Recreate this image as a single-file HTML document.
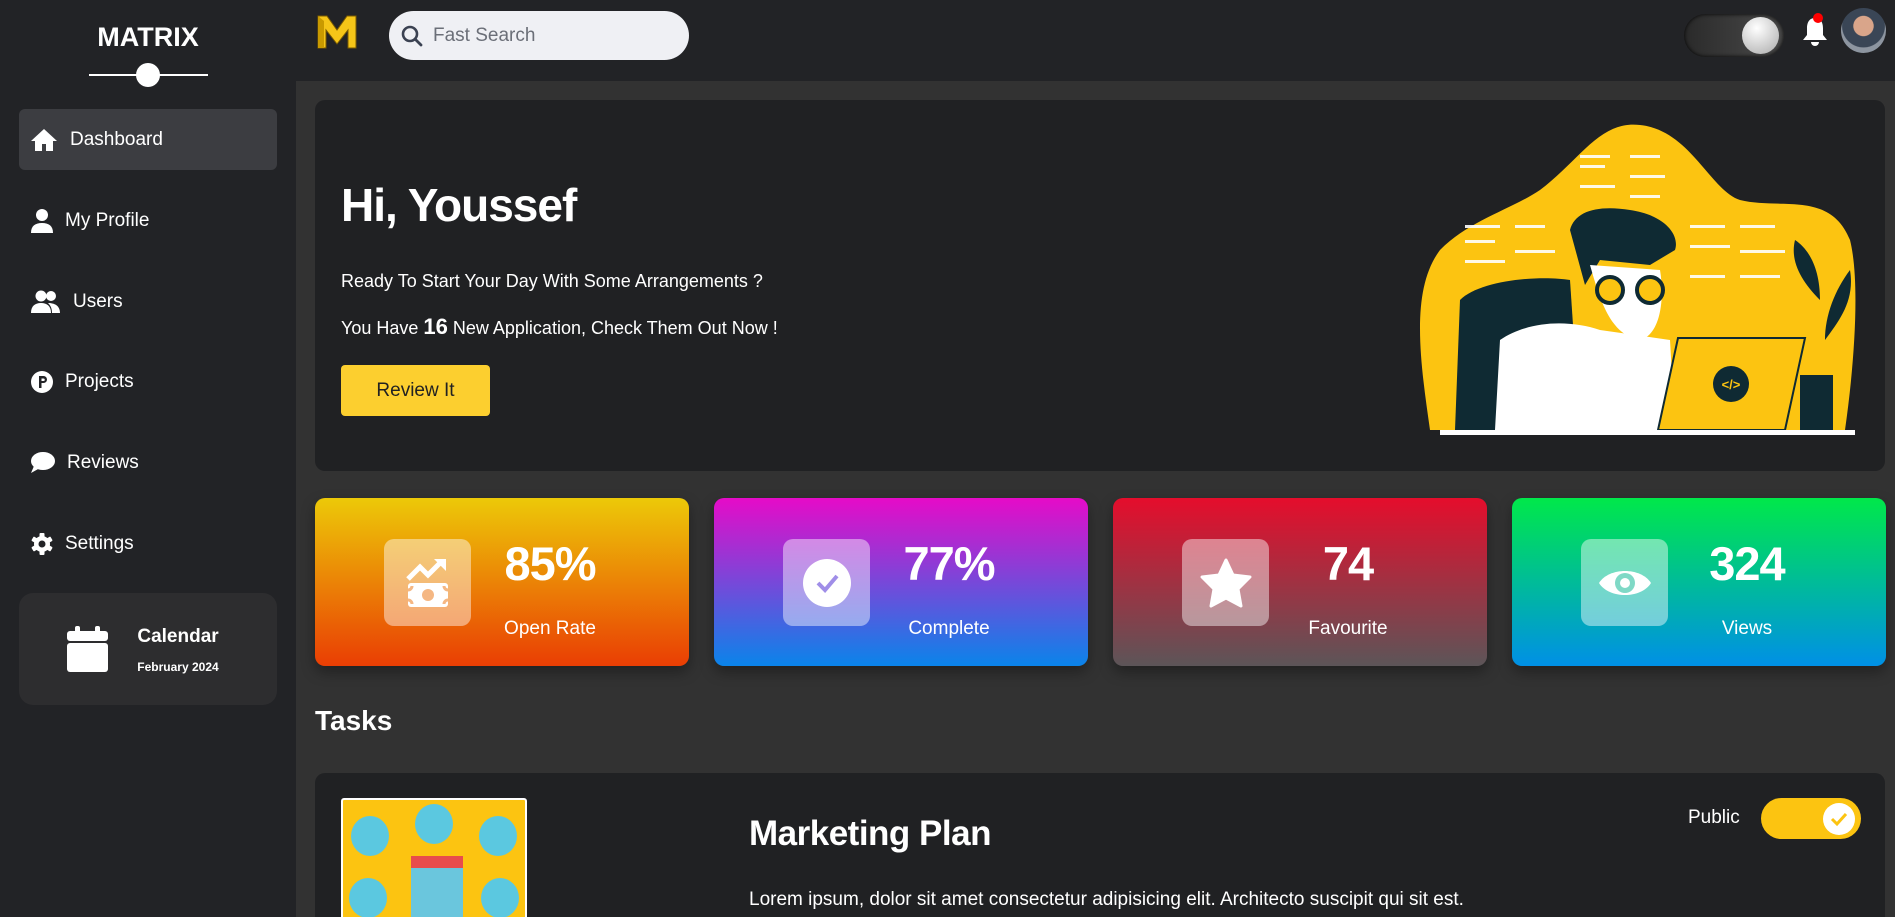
<!DOCTYPE html>
<html><head><meta charset="utf-8"><style>
*{margin:0;padding:0;box-sizing:border-box}
html,body{width:1895px;height:917px;overflow:hidden}
body{background:#323232;font-family:"Liberation Sans",sans-serif;color:#fff;position:relative}
.abs{position:absolute}
.side{left:0;top:0;width:296px;height:917px;background:#222326}
.head{left:296px;top:0;width:1599px;height:81px;background:#222326}
.nav{position:absolute;left:19px;width:258px;height:61px;display:flex;align-items:center;padding-left:12px;font-size:19px}
.nav svg{margin-right:12px}
.card{position:absolute;top:498px;width:374px;height:168px;border-radius:10px;box-shadow:0 6px 14px rgba(0,0,0,.35)}
.ib{position:absolute;left:69px;top:41px;width:87px;height:87px;border-radius:10px;background:rgba(255,255,255,.45);display:flex;align-items:center;justify-content:center}
.num{position:absolute;left:150px;width:170px;text-align:center;top:38px;font-size:47px;font-weight:bold;letter-spacing:-1px}
.lbl{position:absolute;left:150px;width:170px;text-align:center;top:120px;font-size:19px}
</style></head><body>
<div class="abs side"></div>
<div class="abs head"></div>
<div class="abs" style="left:0;width:296px;top:22px;text-align:center;font-size:27px;font-weight:bold">MATRIX</div>
<div class="abs" style="left:89px;top:74px;width:119px;height:2px;background:#fff"></div>
<div class="abs" style="left:136px;top:63px;width:24px;height:24px;border-radius:50%;background:#fff"></div>

<div class="nav" style="top:109px;background:#3c3d41;border-radius:6px;padding-left:11px">
<svg width="28" height="24" viewBox="0 0 28 24"><path d="M14 1L1 13h4v10h7v-7h4v7h7V13h4z" fill="#fff"/></svg>Dashboard</div>
<div class="nav" style="top:190px"><svg width="22" height="24" viewBox="0 0 22 24"><circle cx="11" cy="6" r="6" fill="#fff"/><path d="M0 24c0-7 4-10 11-10s11 3 11 10z" fill="#fff"/></svg>My Profile</div>
<div class="nav" style="top:271px"><svg width="30" height="24" viewBox="0 0 30 24"><circle cx="10" cy="6" r="5.5" fill="#fff"/><circle cx="20" cy="6" r="5" fill="#fff"/><path d="M0 23c0-7 4-10 10-10s10 3 10 10z" fill="#fff"/><path d="M17 13c7 0 12 3 12 10h-8c0-4-1-7-4-10z" fill="#fff"/></svg>Users</div>
<div class="nav" style="top:351px"><svg width="22" height="22" viewBox="0 0 22 22"><circle cx="11" cy="11" r="11" fill="#fff"/><path d="M8 5h4.5a3.5 3.5 0 010 7H10.5v5H8z M10.5 7.5v2.5h2a1.25 1.25 0 000-2.5z" fill="#222326" fill-rule="evenodd"/></svg>Projects</div>
<div class="nav" style="top:432px"><svg width="24" height="22" viewBox="0 0 24 22"><ellipse cx="12" cy="9" rx="12" ry="9" fill="#fff"/><path d="M3 14L0 21l9-5z" fill="#fff"/></svg>Reviews</div>
<div class="nav" style="top:513px"><svg width="22" height="22" viewBox="0 0 22 22"><g fill="#fff" transform="translate(11 11)"><circle r="8"/><rect x="-2.5" y="-11" width="5" height="22" rx="1"/><rect x="-2.5" y="-11" width="5" height="22" rx="1" transform="rotate(60)"/><rect x="-2.5" y="-11" width="5" height="22" rx="1" transform="rotate(120)"/></g><circle cx="11" cy="11" r="3.5" fill="#222326"/></svg>Settings</div>

<div class="abs" style="left:19px;top:593px;width:258px;height:112px;background:#2d2d2f;border-radius:14px"></div>
<svg class="abs" style="left:67px;top:626px" width="41" height="46" viewBox="0 0 41 46"><rect x="8" y="0" width="5" height="8" rx="2" fill="#fff"/><rect x="28" y="0" width="5" height="8" rx="2" fill="#fff"/><rect x="0" y="5" width="41" height="10" rx="3" fill="#fff"/><rect x="0" y="17" width="41" height="29" rx="3" fill="#fff"/></svg>
<div class="abs" style="left:128px;top:626px;width:100px;text-align:center;font-size:19px;font-weight:bold">Calendar</div>
<div class="abs" style="left:120px;top:660px;width:116px;text-align:center;font-size:12px;font-weight:bold">February 2024</div>

<svg class="abs" style="left:316px;top:14px" width="42" height="36" viewBox="0 0 42 36"><path d="M2 2h9l10 14L31 2h9v32h-8V16l-11 14L10 16v18H2z" fill="#f5c518" stroke="#7a5a00" stroke-width="1"/><path d="M2 2l6 5v27H2z" fill="#c99a00"/></svg>
<div class="abs" style="left:389px;top:11px;width:300px;height:49px;border-radius:25px;background:#eff0f4"></div>
<svg class="abs" style="left:401px;top:25px" width="22" height="22" viewBox="0 0 22 22"><circle cx="9" cy="9" r="7" fill="none" stroke="#3b4252" stroke-width="2.6"/><path d="M14 14l6 6" stroke="#3b4252" stroke-width="2.8" stroke-linecap="round"/></svg>
<div class="abs" style="left:433px;top:25px;font-size:19px;color:#6b6f78">Fast Search</div>

<div class="abs" style="left:1684px;top:14px;width:100px;height:43px;border-radius:22px;background:linear-gradient(90deg,#2a2a2a,#4a4a4a);box-shadow:inset 0 0 4px #000"></div>
<div class="abs" style="left:1742px;top:17px;width:37px;height:37px;border-radius:50%;background:radial-gradient(circle at 40% 30%,#fff,#aaa)"></div>
<svg class="abs" style="left:1800px;top:12px" width="30" height="36" viewBox="0 0 30 36"><path d="M15 6c-6 0-8 5-8 10v7l-4 5h24l-4-5v-7c0-5-2-10-8-10z" fill="#fff"/><path d="M11 30a4 4 0 008 0z" fill="#fff"/><circle cx="18" cy="6" r="5" fill="#f00"/></svg>
<div class="abs" style="left:1841px;top:8px;width:45px;height:45px;border-radius:50%;background:radial-gradient(circle at 50% 40%,#d9a58a 0 28%,#3a4656 30% 60%,#8d95a0 62%)"></div>

<div class="abs" style="left:315px;top:100px;width:1570px;height:371px;background:#202123;border-radius:10px"></div>
<div class="abs" style="left:341px;top:178px;font-size:46px;font-weight:bold;letter-spacing:-1px">Hi, Youssef</div>
<div class="abs" style="left:341px;top:271px;font-size:18px">Ready To Start Your Day With Some Arrangements ?</div>
<div class="abs" style="left:341px;top:314px;font-size:18px">You Have <span style="font-size:22px;font-weight:bold">16</span> New Application, Check Them Out Now !</div>
<div class="abs" style="left:341px;top:365px;width:149px;height:51px;background:#fccf2f;border-radius:4px;color:#222;font-size:19px;display:flex;align-items:center;justify-content:center">Review It</div>

<svg class="abs" style="left:1400px;top:100px" width="495" height="350" viewBox="0 0 495 350">
<path d="M30 330C20 260 10 190 40 150C70 120 110 110 140 90C180 60 200 20 240 25C290 30 310 90 340 100C380 110 430 90 450 140C460 180 455 260 445 330Z" fill="#fcc411"/>
<g fill="#fff" opacity=".9"><rect x="180" y="55" width="30" height="3"/><rect x="180" y="65" width="25" height="3"/><rect x="230" y="55" width="30" height="3"/><rect x="230" y="75" width="35" height="3"/><rect x="180" y="85" width="35" height="3"/><rect x="230" y="95" width="30" height="3"/><rect x="65" y="125" width="35" height="3"/><rect x="65" y="140" width="30" height="3"/><rect x="65" y="160" width="40" height="3"/><rect x="115" y="125" width="30" height="3"/><rect x="115" y="150" width="40" height="3"/><rect x="290" y="125" width="35" height="3"/><rect x="290" y="145" width="40" height="3"/><rect x="290" y="175" width="35" height="3"/><rect x="340" y="125" width="35" height="3"/><rect x="340" y="150" width="45" height="3"/><rect x="340" y="175" width="40" height="3"/></g>
<path d="M55 330L60 200C80 180 140 175 170 180L180 330Z" fill="#0f2a33"/>
<path d="M95 330L100 240C130 220 170 220 200 230L270 240L275 330Z" fill="#fff"/>
<path d="M170 130C175 110 200 105 230 110C265 115 280 135 275 150L250 165L200 160L185 185Z" fill="#0f2a33"/>
<path d="M190 165C200 200 210 235 240 240C260 235 265 200 260 170Z" fill="#fff"/>
<circle cx="210" cy="190" r="13" fill="#fcc411" stroke="#0f2a33" stroke-width="4"/><circle cx="250" cy="190" r="13" fill="#fcc411" stroke="#0f2a33" stroke-width="4"/>
<path d="M278 238H405L385 330H258Z" fill="#fcc411" stroke="#0f2a33" stroke-width="2"/>
<circle cx="331" cy="284" r="18" fill="#0f2a33"/><text x="331" y="289" font-size="13" font-weight="bold" fill="#fcc411" text-anchor="middle" font-family="Liberation Sans">&lt;/&gt;</text>
<path d="M420 200C400 180 390 160 395 140C410 150 420 170 420 200ZM425 240C440 220 455 200 450 170C435 190 425 215 425 240Z" fill="#0f2a33"/>
<rect x="400" y="275" width="33" height="55" fill="#0f2a33"/>
<rect x="40" y="330" width="415" height="5" fill="#fff"/>
</svg>

<div class="card" style="left:315px;background:linear-gradient(180deg,#ecc908,#ea3e04)"><div class="ib"><svg width="48" height="52" viewBox="0 0 48 52"><path d="M4 22l12-12 8 8 12-12" fill="none" stroke="#fff" stroke-width="5"/><path d="M30 2h12v12z" fill="#fff"/><rect x="4" y="26" width="40" height="24" rx="3" fill="#fff"/><circle cx="24" cy="38" r="6" fill="#f5b783"/><path d="M4 33a4 4 0 004-4M44 33a4 4 0 01-4-4M4 43a4 4 0 014 4M44 43a4 4 0 00-4 4" stroke="#f5b783" stroke-width="3" fill="none"/></svg></div><div class="num">85%</div><div class="lbl">Open Rate</div></div>
<div class="card" style="left:714px;background:linear-gradient(180deg,#e60bc8,#0a84ea)"><div class="ib"><svg width="50" height="50" viewBox="0 0 50 50"><circle cx="25" cy="25" r="24" fill="#fff"/><path d="M16 25l7 7 12-14" stroke="#a08ee8" stroke-width="4" fill="none"/></svg></div><div class="num">77%</div><div class="lbl">Complete</div></div>
<div class="card" style="left:1113px;background:linear-gradient(180deg,#e50d2c,#5c5558)"><div class="ib"><svg width="52" height="50" viewBox="0 0 52 50"><path d="M26 2l7 15 17 2-12 12 3 17-15-8-15 8 3-17L2 19l17-2z" fill="#fff" stroke="#fff" stroke-width="3" stroke-linejoin="round"/></svg></div><div class="num">74</div><div class="lbl">Favourite</div></div>
<div class="card" style="left:1512px;background:linear-gradient(180deg,#00e84a,#0090e6)"><div class="ib"><svg width="56" height="40" viewBox="0 0 56 40"><path d="M2 20C12 4 44 4 54 20C44 36 12 36 2 20Z" fill="#fff"/><circle cx="28" cy="20" r="10" fill="#7fd9c6"/><circle cx="28" cy="20" r="5" fill="#fff"/></svg></div><div class="num">324</div><div class="lbl">Views</div></div>

<div class="abs" style="left:315px;top:705px;font-size:28px;font-weight:bold">Tasks</div>
<div class="abs" style="left:315px;top:773px;width:1570px;height:144px;background:#202123;border-radius:10px 10px 0 0"></div>
<div class="abs" style="left:341px;top:798px;width:186px;height:140px;background:#fcc411;border:2px solid #fff;border-radius:3px;overflow:hidden">
<div class="abs" style="left:8px;top:16px;width:38px;height:40px;border-radius:50%;background:#5bc8e0"></div>
<div class="abs" style="left:72px;top:4px;width:38px;height:40px;border-radius:50%;background:#5bc8e0"></div>
<div class="abs" style="left:136px;top:16px;width:38px;height:40px;border-radius:50%;background:#5bc8e0"></div>
<div class="abs" style="left:6px;top:78px;width:38px;height:40px;border-radius:50%;background:#5bc8e0"></div>
<div class="abs" style="left:138px;top:78px;width:38px;height:40px;border-radius:50%;background:#5bc8e0"></div>
<div class="abs" style="left:68px;top:56px;width:52px;height:90px;background:#6ac6dd;border-top:12px solid #e84c4c"></div>
</div>
<div class="abs" style="left:749px;top:814px;font-size:35px;font-weight:bold;letter-spacing:-0.5px">Marketing Plan</div>
<div class="abs" style="left:749px;top:889px;font-size:19px">Lorem ipsum, dolor sit amet consectetur adipisicing elit. Architecto suscipit qui sit est.</div>
<div class="abs" style="left:1688px;top:807px;font-size:19px">Public</div>
<div class="abs" style="left:1761px;top:798px;width:100px;height:41px;border-radius:21px;background:#fcc411"></div>
<svg class="abs" style="left:1822px;top:802px" width="34" height="34" viewBox="0 0 34 34"><circle cx="17" cy="17" r="16" fill="#fff"/><path d="M10 17l5 5 9-10" stroke="#fcc411" stroke-width="3" fill="none"/></svg>
</body></html>
